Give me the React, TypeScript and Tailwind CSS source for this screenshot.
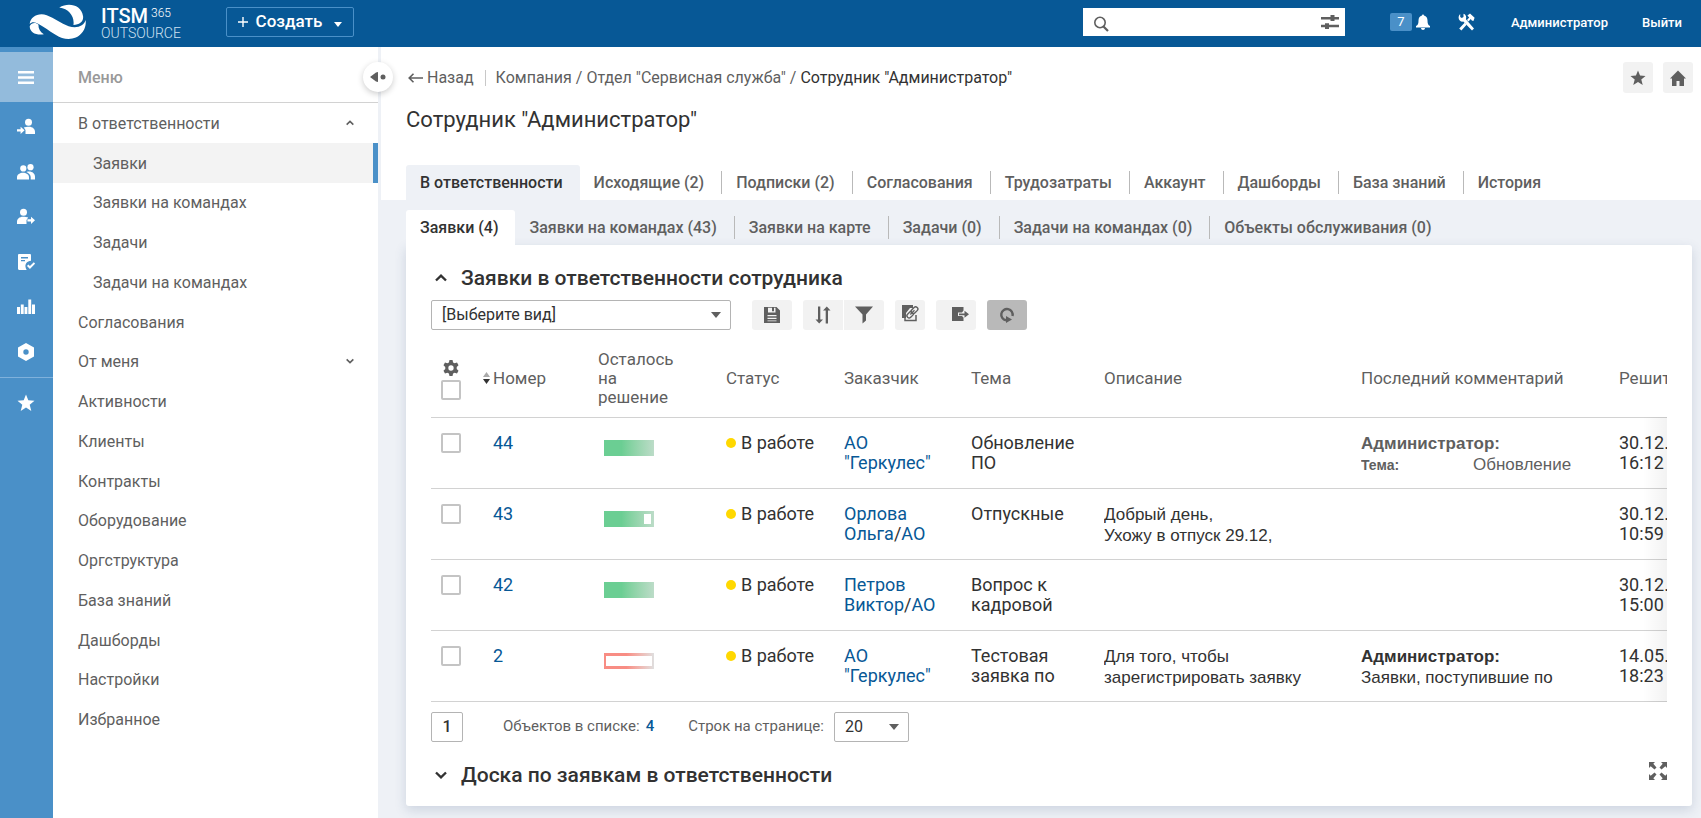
import type { ReactNode } from "react";

const Logo = () => (
  <svg viewBox="28 10 178 112" className="h-9 w-[58px] shrink-0" fill="#fff" aria-hidden="true">
    <path d="M29 72C31 50 56 36 82 45C106 54 126 70 150 79C176 88 198 78 203 60C207 92 183 119 150 119C122 119 98 98 76 84C56 71 40 60 29 72Z" />
    <path d="M121 21C150 4 190 13 195 48C197 64 184 75 165 75C169 50 152 25 121 21Z" />
    <path d="M29 79C34 68 48 66 56 74C56 88 62 98 73 104C50 108 29 99 29 79Z" />
  </svg>
);

const Svg = ({ children, className = "size-[18px]", box = "0 0 18 18" }: { children: ReactNode; className?: string; box?: string }) => (
  <svg viewBox={box} className={className} fill="currentColor" aria-hidden="true">
    {children}
  </svg>
);

const STAR = "M9 .5l2.3 5.8 6.2.4-4.8 4 1.6 6.3L9 13.5 3.7 17l1.6-6.3-4.8-4 6.2-.4z";

const railIcons: { label: string; icon: ReactNode }[] = [
  {
    label: "Входящие",
    icon: (
      <Svg>
        <circle cx="11.5" cy="4.2" r="3.5" />
        <path d="M8.5 16V12L6.8 9.6C8 9 10 8.8 12 8.8c3.600 0 6 2.200 6 5V16z" />
        <path d="M0 11.300h3.600V8.800l4 3.500-4 3.700v-2.600H0z" />
      </Svg>
    ),
  },
  {
    label: "Команды",
    icon: (
      <Svg>
        <circle cx="6.300" cy="5.400" r="3.100" />
        <circle cx="13.500" cy="4.200" r="3.100" />
        <path d="M0 16.500v-2.200c0-3 3-4.600 6-4.600s6 1.600 6 4.600v2.200z" />
        <path d="M9.500 8.900c4.500-1.400 8.500 1 8.500 4.600v3h-4.300v-2.400c0-2.300-1.800-4.100-4.200-5.200z" />
      </Svg>
    ),
  },
  {
    label: "Исходящие",
    icon: (
      <Svg>
        <circle cx="6.500" cy="4.200" r="3.500" />
        <path d="M9.500 16V12l1.700-2.400C10 9 8 8.800 6 8.800c-3.600 0-6 2.200-6 5V16z" />
        <path d="M10.400 11.300H14V8.800l4 3.500-4 3.700v-2.600h-3.600z" />
      </Svg>
    ),
  },
  {
    label: "Согласования",
    icon: (
      <Svg>
        <path fillRule="evenodd" d="M1 2.200C1 1.500 1.500 1 2.200 1h10.600c.7 0 1.200.5 1.200 1.200v5.500c-4 .4-6 3-5.500 6.300.2 1.200.6 2 1.200 3H2.200C1.500 17 1 16.500 1 15.800zM4 4v1.400h7V4zm0 3v1.300h4V7z" />
        <path d="M10.700 12.300l2.200 2.200 4.600-4.600" fill="none" stroke="currentColor" strokeWidth="2" />
      </Svg>
    ),
  },
  {
    label: "Отчёты",
    icon: (
      <Svg>
        <path d="M0 9h3v7H0zM3.800 6.500h2.900V16H3.800zM7.500 9h2.900v7H7.500zM11.300 1.500h2.900V16h-2.900zM15 6.500h3V16h-3z" />
      </Svg>
    ),
  },
  {
    label: "Настройки",
    icon: (
      <Svg>
        <path fillRule="evenodd" d="M9 0l8 4.500v9L9 18l-8-4.500v-9zm0 6.300a2.700 2.700 0 100 5.400 2.700 2.700 0 000-5.400z" />
      </Svg>
    ),
  },
];

const menu: { label: string; child?: boolean; active?: boolean; chevron?: "up" | "down" }[] = [
  { label: "В ответственности", chevron: "up" },
  { label: "Заявки", child: true, active: true },
  { label: "Заявки на командах", child: true },
  { label: "Задачи", child: true },
  { label: "Задачи на командах", child: true },
  { label: "Согласования" },
  { label: "От меня", chevron: "down" },
  { label: "Активности" },
  { label: "Клиенты" },
  { label: "Контракты" },
  { label: "Оборудование" },
  { label: "Оргструктура" },
  { label: "База знаний" },
  { label: "Дашборды" },
  { label: "Настройки" },
  { label: "Избранное" },
];

const Chevron = ({ dir, className }: { dir: "up" | "down"; className: string }) => (
  <svg viewBox="0 0 12 8" className={className} fill="none" stroke="currentColor" strokeWidth="2.400" aria-hidden="true">
    <path d={dir === "up" ? "M1 6.500L6 1.700l5 4.800" : "M1 1.500l5 4.800 5-4.800"} />
  </svg>
);

const mainTabs = ["В ответственности", "Исходящие (2)", "Подписки (2)", "Согласования", "Трудозатраты", "Аккаунт", "Дашборды", "База знаний", "История"];
const subTabs = ["Заявки (4)", "Заявки на командах (43)", "Заявки на карте", "Задачи (0)", "Задачи на командах (0)", "Объекты обслуживания (0)"];

const Tabs = ({ items, activeClass }: { items: string[]; activeClass: string }) => (
  <div role="tablist" className="flex items-stretch">
    {items.map((t, i) => (
      <div key={t} className="flex items-center">
        <button
          role="tab"
          aria-selected={i === 0}
          className={`h-[35px] whitespace-nowrap pl-[14px] pr-[17px] text-base font-medium ${i === 0 ? `rounded-t-[3px] text-[#323232] ${activeClass}` : "text-[#5f5f5f]"}`}
        >
          {t}
        </button>
        {i > 0 && i < items.length - 1 && <span className="h-[23px] w-px bg-[#b9b9b9]" />}
      </div>
    ))}
  </div>
);

type Row = { id: string; bar: "full" | "part" | "late"; client: ReactNode; subject: ReactNode; desc?: ReactNode; comment?: ReactNode; due: [string, string] };

const Blue = ({ children }: { children: ReactNode }) => (
  <a href="#" className="text-[#075896]">
    {children}
  </a>
);

const rows: Row[] = [
  {
    id: "44",
    bar: "full",
    client: <Blue>АО<br />"Геркулес"</Blue>,
    subject: <>Обновление<br />ПО</>,
    comment: (
      <div className="text-[#5f5f5f]">
        <b>Администратор:</b>
        <div className="flex items-baseline">
          <b className="w-28 text-sm leading-[21px]">Тема:</b>
          <span>Обновление</span>
        </div>
      </div>
    ),
    due: ["30.12.2021", "16:12"],
  },
  {
    id: "43",
    bar: "part",
    client: <><Blue>Орлова<br />Ольга</Blue>/<Blue>АО</Blue></>,
    subject: "Отпускные",
    desc: <>Добрый день,<br />Ухожу в отпуск 29.12,</>,
    due: ["30.12.2021", "10:59"],
  },
  {
    id: "42",
    bar: "full",
    client: <><Blue>Петров<br />Виктор</Blue>/<Blue>АО</Blue></>,
    subject: <>Вопрос к<br />кадровой</>,
    due: ["30.12.2021", "15:00"],
  },
  {
    id: "2",
    bar: "late",
    client: <Blue>АО<br />"Геркулес"</Blue>,
    subject: <>Тестовая<br />заявка по</>,
    desc: <>Для того, чтобы<br />зарегистрировать заявку</>,
    comment: <><b>Администратор:</b><br />Заявки, поступившие по</>,
    due: ["14.05.2021", "18:23"],
  },
];

const Bar = ({ kind }: { kind: Row["bar"] }) =>
  kind === "late" ? (
    <div className="mt-[7px] ml-[6px] h-4 w-[50px] bg-linear-to-r from-[#f88d84] from-45% to-[#dfdfdf] px-[2px] py-[3px]">
      <div className="h-full bg-white" />
    </div>
  ) : (
    <div className="mt-[7px] ml-[6px] flex h-4 w-[50px] justify-end bg-linear-to-r from-[#6bce93] from-35% to-[#bcdcc8] p-[3px]">
      {kind === "part" && <div className="h-full w-[7px] bg-white" />}
    </div>
  );

const Check = ({ label }: { label: string }) => (
  <input type="checkbox" aria-label={label} className="block size-5 appearance-none rounded-[2px] border-2 border-[#c4c4c4] bg-white" />
);

const Tool = ({ label, className, children }: { label: string; className: string; children: ReactNode }) => (
  <button aria-label={label} className={`flex h-[30px] items-center justify-center text-[#5f5f5f] ${className}`}>
    {children}
  </button>
);

const ARIAL = "font-['Liberation_Sans',Arial,sans-serif]";
const heads = ["Статус", "Заказчик", "Тема", "Описание", "Последний комментарий", "Решить до"];

export default function App() {
  return (
    <div className="flex min-h-screen flex-col bg-[#eef1f6] font-[Roboto,sans-serif] text-[#323232]">
      <header className="flex h-[47px] items-center bg-[#075896] pr-[19px] text-white">
        <a href="#" className="flex w-[196px] items-center gap-[14px] pb-[3px] pl-[29px]" aria-label="ITSM 365 Outsource">
          <Logo />
          <span className="pt-[2px]">
            <span className="flex items-start gap-[3px] text-xl leading-5 font-medium">
              ITSM<span className="text-xs leading-[14px] font-light">365</span>
            </span>
            <span className="block text-sm leading-[14px] font-light text-[#cfe1f1]">OUTSOURCE</span>
          </span>
        </a>
        <button className="mb-[3px] ml-[30px] flex h-[30px] w-32 items-center justify-center rounded-[2px] border border-[#4a90c8] text-[17px] font-medium">
          <svg viewBox="0 0 10 10" className="mr-2 size-[10px]" stroke="#fff" strokeWidth="1.400" aria-hidden="true"><path d="M5 0v10M0 5h10" /></svg>
          Создать
          <svg viewBox="0 0 8 5" className="mt-1 ml-3 h-[5px] w-2" fill="#fff" aria-hidden="true"><path d="M0 0h8L4 5z" /></svg>
        </button>
        <div className="mb-[3px] ml-auto flex h-7 w-[262px] items-center bg-white px-[6px] text-[#5f5f5f]">
          <svg viewBox="0 0 16 16" className="mt-1 ml-1 size-4 shrink-0" fill="none" stroke="currentColor" aria-hidden="true">
            <circle cx="7" cy="6.500" r="5.200" strokeWidth="1.600" />
            <path d="M10.500 10.500l4.500 4.500" strokeWidth="2.200" />
          </svg>
          <input aria-label="Поиск" className="min-w-0 flex-1 bg-transparent px-2 text-sm outline-none" />
          <svg viewBox="0 0 18 14" className="h-[14px] w-[18px] shrink-0" fill="currentColor" aria-hidden="true">
            <path d="M0 2h9.500V0h4v2H18v2.600h-4.500V6h-4V4.600H0zM0 9.800h4V8.200h4v1.600h10v2.400H8V14H4v-1.800H0z" />
          </svg>
        </div>
        <button className="mb-[3px] ml-[45px] flex items-center gap-1 text-sm" aria-label="Уведомления">
          <span className="flex h-[18px] w-[22px] items-center justify-center rounded-[2px] bg-[#4a90c8] text-[13px]">7</span>
          <svg viewBox="0 0 14 16" className="h-4 w-[14px]" fill="#fff" aria-hidden="true">
            <path d="M6 1.500C6 0 8 0 8 1.500c2.400.6 3.500 2.600 3.500 5 0 3 .5 4.500 2.500 5.500v1.500H0V12c2-1 2.500-2.500 2.500-5.500 0-2.400 1.100-4.400 3.500-5zM5 14h4c0 2.500-4 2.500-4 0z" />
          </svg>
        </button>
        <button className="mb-[3px] ml-[28px]" aria-label="Инструменты">
          <svg viewBox="0 0 17 18" className="h-[18px] w-[17px]" fill="#fff" aria-hidden="true">
            <path d="M2.200 1v3l1.600 1L5.500 4V.8C8 1.600 8.700 4 7.900 6.200L16 15.500l-2 2L5.300 8.600C3 9 .5 7.500.6 4.500.7 3 1.300 1.800 2.200 1z" />
            <path d="M12 .5l4.600 4.300-1.200 3.200-1.600-.6-1-1.500-2.300 2.500L9 7l2.200-2.600-1.800-1.900zM6.600 9.800l2 1.900-5.200 5.900-2.200-2z" />
          </svg>
        </button>
        <a href="#" className="mb-[2px] ml-9 text-[13px] font-medium">Администратор</a>
        <a href="#" className="mb-[2px] ml-[34px] text-[13px] font-medium">Выйти</a>
      </header>

      <div className="flex flex-1">
        <aside className="w-[53px] shrink-0 bg-[#4a90c8] pt-[5px] text-white">
          <button className="flex h-[50px] w-full items-center justify-center bg-[#93bbdc] pr-[2px]" aria-label="Меню">
            <svg viewBox="0 0 16 13" className="h-[13px] w-4" fill="#fff" aria-hidden="true">
              <path d="M0 0h16v2.500H0zM0 5.200h16v2.500H0zM0 10.500h16V13H0z" />
            </svg>
          </button>
          <div className="border-b border-[#7fb1dc] pt-[2px] pb-[3px]">
            {railIcons.map((r) => (
              <button key={r.label} aria-label={r.label} className="flex h-[45px] w-full items-center justify-center pr-[2px]">
                {r.icon}
              </button>
            ))}
          </div>
          <button aria-label="Избранное" className="flex h-[50px] w-full items-center justify-center pr-[2px]">
            <Svg><path d={STAR} /></Svg>
          </button>
        </aside>

        <nav className="relative w-[325px] shrink-0 bg-white text-[#5f5f5f]" aria-label="Меню">
          <div className="flex h-14 items-center border-b border-[#d2d2d2] pt-[7px] pl-[25px] text-base font-medium text-[#999]">Меню</div>
          <ul className="flex h-[636px] flex-col">
            {menu.map((m) => (
              <li key={m.label} className="flex flex-1">
                <a
                  href="#"
                  className={`flex flex-1 items-center justify-between pt-[2px] pr-6 text-base ${m.child ? "pl-10" : "pl-[25px]"} ${m.active ? "border-r-[5px] border-[#4a90c8] bg-[#f3f3f3]" : ""}`}
                >
                  {m.label}
                  {m.chevron && <Chevron dir={m.chevron} className="mb-[2px] h-[6px] w-2" />}
                </a>
              </li>
            ))}
          </ul>
          <button
            aria-label="Свернуть меню"
            className="absolute top-[15px] -right-[15px] flex size-[30px] items-center justify-center rounded-full bg-white text-[#5f5f5f] shadow-[0_2px_6px_rgba(0,0,0,0.2)]"
          >
            <svg viewBox="0 0 16 10" className="h-[10px] w-4" fill="currentColor" aria-hidden="true">
              <path d="M0 5l6-4.500L8 0v10L6 9.500z" />
              <circle cx="13" cy="5" r="2.500" />
            </svg>
          </button>
        </nav>

        <main className="flex min-w-0 flex-1 flex-col pl-[3px]">
          <section className="bg-white pl-[25px]">
            <div className="flex items-start justify-between pt-[15px] pr-2">
              <div className="flex h-8 items-center text-base text-[#5f5f5f]">
                <a href="#" className="flex items-center gap-1 border-r border-[#c8c8c8] pr-[11px] pl-[2px] leading-4">
                  <svg viewBox="0 0 15 10" className="h-[10px] w-[15px]" fill="none" stroke="currentColor" strokeWidth="1.600" aria-hidden="true">
                    <path d="M5.500.7L1.200 5l4.300 4.300M1.200 5H15" />
                  </svg>
                  Назад
                </a>
                <span className="pl-[10px]">
                  <a href="#">Компания</a> / <a href="#">Отдел "Сервисная служба"</a> / <span className="text-[#323232]">Сотрудник "Администратор"</span>
                </span>
              </div>
              <div className="flex gap-[10px]">
                <button aria-label="В избранное" className="flex h-[31px] w-[30px] items-center justify-center rounded-[3px] bg-[#f2f2f2] text-[#5f5f5f]">
                  <Svg className="size-4"><path d={STAR} /></Svg>
                </button>
                <button aria-label="Домашняя страница" className="flex h-[31px] w-[30px] items-center justify-center rounded-[3px] bg-[#f2f2f2] text-[#5f5f5f]">
                  <Svg className="size-4" box="0 0 16 16"><path d="M8 .5L16 8.500h-2V16H9.500v-5h-3v5H2V8.500H0z" /></Svg>
                </button>
              </div>
            </div>
            <h1 className="pt-3 pb-[31px] text-[22px] leading-7">Сотрудник "Администратор"</h1>
            <Tabs items={mainTabs} activeClass="bg-[#eef1f6]" />
          </section>

          <section className="pt-[10px] pr-[9px] pl-[25px]">
            <Tabs items={subTabs} activeClass="bg-white" />
            <div className="rounded-b-[3px] rounded-tr-[3px] bg-white px-[25px] pt-5 pb-[18px] shadow-[0_4px_12px_rgba(50,80,120,0.18)]">
              <h2 className="flex items-center text-[21px] leading-[26px] font-medium">
                <Chevron dir="up" className="mr-[14px] ml-1 h-2 w-3" />
                Заявки в ответственности сотрудника
              </h2>
              <div className="flex items-center pt-[9px]">
                <div className="relative w-[300px]">
                  <select aria-label="Вид" className="h-[30px] w-full appearance-none rounded-[2px] border border-[#b4b4b4] bg-white pl-[10px] text-base">
                    <option>[Выберите вид]</option>
                  </select>
                  <svg viewBox="0 0 10 6" className="pointer-events-none absolute top-3 right-[10px] h-[6px] w-[10px]" fill="#5f5f5f" aria-hidden="true"><path d="M0 0h10L5 6z" /></svg>
                </div>
                <Tool label="Сохранить вид" className="ml-[21px] w-10 rounded-[3px] bg-[#f2f2f2]">
                  <Svg><path fillRule="evenodd" d="M1 1h12.500L17 4.500V17H1zm4 .8v4.700h7.500V1.800H11v3.400H9V1.800zM4.500 9v1.200h9V9zm0 2.800V13h9v-1.200zm0 2.700v.8h9v-.8z" /></Svg>
                </Tool>
                <Tool label="Сортировка" className="ml-[11px] w-10 rounded-l-[3px] bg-[#f2f2f2]">
                  <Svg><path d="M4 0.500h2.300v13H9L5.200 17.500 1.500 13.500H4zM11.700 17.500H14V4.500h2.500L12.800.5 9 4.500h2.700z" /></Svg>
                </Tool>
                <Tool label="Фильтр" className="ml-px w-10 rounded-r-[3px] bg-[#f2f2f2]">
                  <Svg><path d="M0 .5h18l-7 8v6L7.500 17.500V8.500z" /></Svg>
                </Tool>
                <Tool label="Ссылка" className="ml-[11px] w-[30px] rounded-[3px] bg-[#f2f2f2] pb-1">
                  <svg viewBox="0 0 18 18" className="size-[18px]" fill="none" stroke="currentColor" aria-hidden="true">
                    <path d="M1 1h11v3H9L5 9v5H1z" fill="currentColor" stroke="none" />
                    <path d="M4 9v7.500h11V11" strokeWidth="1.500" />
                    <rect x="5.500" y="8.500" width="7.500" height="4.400" rx="2.200" transform="rotate(-45 9.200 10.700)" fill="#f2f2f2" strokeWidth="1.400" />
                    <rect x="9.800" y="4" width="7.500" height="4.400" rx="2.200" transform="rotate(-45 13.500 6.200)" fill="#f2f2f2" strokeWidth="1.400" />
                    <path d="M9.300 10.500l4.200-4.200" strokeWidth="1.300" />
                  </svg>
                </Tool>
                <Tool label="Экспорт" className="ml-[11px] w-10 rounded-[3px] bg-[#f2f2f2] pb-[2px] pl-2">
                  <svg viewBox="0 0 18 16" className="h-4 w-[18px]" fill="currentColor" aria-hidden="true">
                    <path d="M1 1h11.500v3.500L11 6.500H7v3.600h4l1.500 1.500V15H1z" />
                    <path d="M8 7.500h5.500V4.800L18 8.300l-4.500 3.500V9.200H8z" />
                  </svg>
                </Tool>
                <Tool label="Обновить" className="ml-[11px] w-10 rounded-[3px] bg-[#b9b9b9]">
                  <svg viewBox="0 0 16 16" className="size-4" fill="none" stroke="currentColor" strokeWidth="2.400" aria-hidden="true">
                    <path d="M7 13.300A5.700 5.700 0 1113.500 9" />
                    <path d="M7 9v7l6-3.500z" fill="currentColor" stroke="none" />
                  </svg>
                </Tool>
              </div>

              <div className="relative mt-[10px] overflow-hidden">
                <table className="w-full min-w-[1328px] table-fixed text-left">
                  <colgroup>
                    <col className="w-[52px]" />
                    <col className="w-[105px]" />
                    <col className="w-[128px]" />
                    <col className="w-[118px]" />
                    <col className="w-[127px]" />
                    <col className="w-[133px]" />
                    <col className="w-[257px]" />
                    <col className="w-[258px]" />
                    <col />
                  </colgroup>
                  <thead>
                    <tr className="h-[77px] border-b border-[#d2d2d2] text-[17px] leading-[19px] text-[#5f5f5f]">
                      <th className="pt-[3px] pl-[10px] font-normal">
                        <Svg className="mb-1 ml-[2px] size-4" box="0 0 24 24">
                          <path fillRule="evenodd" d="M9.700 0h4.600l.8 3.600 2.400 1.300 3.500-1.100 2.300 4-2.700 2.600v3.200l2.700 2.600-2.300 4-3.500-1.100-2.400 1.300-.8 3.600H9.700l-.8-3.600-2.400-1.300L3 20.200l-2.300-4 2.700-2.600v-3.200L.7 7.800l2.300-4 3.500 1.100 2.400-1.300zM12 8a4 4 0 100 8 4 4 0 000-8z" />
                        </Svg>
                        <Check label="Выбрать все" />
                      </th>
                      <th className="font-normal">
                        <span className="flex items-center gap-[3px]">
                          <svg viewBox="0 0 7 12" className="h-3 w-[7px]" aria-hidden="true">
                            <path d="M0 5L3.500 0 7 5z" fill="#aaa" />
                            <path d="M0 7h7l-3.500 5z" fill="#323232" />
                          </svg>
                          Номер
                        </span>
                      </th>
                      <th className="pl-[10px] font-normal">Осталось<br />на<br />решение</th>
                      {heads.map((h) => (
                        <th key={h} className="pl-[10px] font-normal whitespace-nowrap">{h}</th>
                      ))}
                    </tr>
                  </thead>
                  <tbody>
                    {rows.map((r) => (
                      <tr key={r.id} className="h-[71px] border-b border-[#d2d2d2] align-top text-lg leading-5 *:pt-[15px] *:pl-[10px]">
                        <td><Check label={`Выбрать заявку ${r.id}`} /></td>
                        <td><Blue>{r.id}</Blue></td>
                        <td><Bar kind={r.bar} /></td>
                        <td>
                          <span className="flex items-center gap-[5px] whitespace-nowrap">
                            <span className="size-[10px] rounded-full bg-[#ffd800]" />
                            В работе
                          </span>
                        </td>
                        <td>{r.client}</td>
                        <td>{r.subject}</td>
                        <td><div className={`max-h-10 overflow-hidden text-[17px] leading-[21px] ${ARIAL}`}>{r.desc}</div></td>
                        <td><div className={`max-h-10 overflow-hidden text-[17px] leading-[21px] ${ARIAL}`}>{r.comment}</div></td>
                        <td>{r.due[0]}<br />{r.due[1]}</td>
                      </tr>
                    ))}
                  </tbody>
                </table>
                <div className="pointer-events-none absolute top-[77px] right-0 bottom-0 w-[24px] bg-linear-to-r from-transparent to-black/5" />
              </div>

              <div className="flex items-center pt-[10px] text-[15px] text-[#5f5f5f]">
                <button className="h-[30px] w-8 rounded-[2px] border border-[#b4b4b4] text-base font-medium text-[#323232]">1</button>
                <span className="ml-10">Объектов в списке:</span>
                <a href="#" className="ml-[6px] font-medium text-[#075896]">4</a>
                <label htmlFor="page-size" className="ml-[34px]">Строк на странице:</label>
                <div className="relative ml-[10px] w-[75px]">
                  <select id="page-size" className="h-[30px] w-full appearance-none rounded-[2px] border border-[#b4b4b4] bg-white pl-[10px] text-base text-[#323232]">
                    <option>20</option>
                  </select>
                  <svg viewBox="0 0 10 6" className="pointer-events-none absolute top-3 right-[10px] h-[6px] w-[10px]" fill="#5f5f5f" aria-hidden="true"><path d="M0 0h10L5 6z" /></svg>
                </div>
              </div>

              <div className="flex items-start justify-between pt-5">
                <h2 className="flex items-center text-[21px] leading-[26px] font-medium">
                  <Chevron dir="down" className="mr-[14px] ml-1 h-2 w-3" />
                  Доска по заявкам в ответственности
                </h2>
                <button aria-label="На весь экран" className="text-[#5f5f5f]">
                  <Svg>
                    <path d="M0 0h6L4.300 1.700 7.500 5.500 5.500 7.500 1.700 4.300 0 6zM18 0h-6l1.700 1.700-3.200 3.800 2 2 3.800-3.200L18 6zM0 18h6l-1.700-1.700 3.200-3.800-2-2-3.800 3.200L0 12zM18 18h-6l1.700-1.700-3.200-3.800 2-2 3.800 3.200L18 12z" />
                  </Svg>
                </button>
              </div>
            </div>
          </section>
        </main>
      </div>
    </div>
  );
}
